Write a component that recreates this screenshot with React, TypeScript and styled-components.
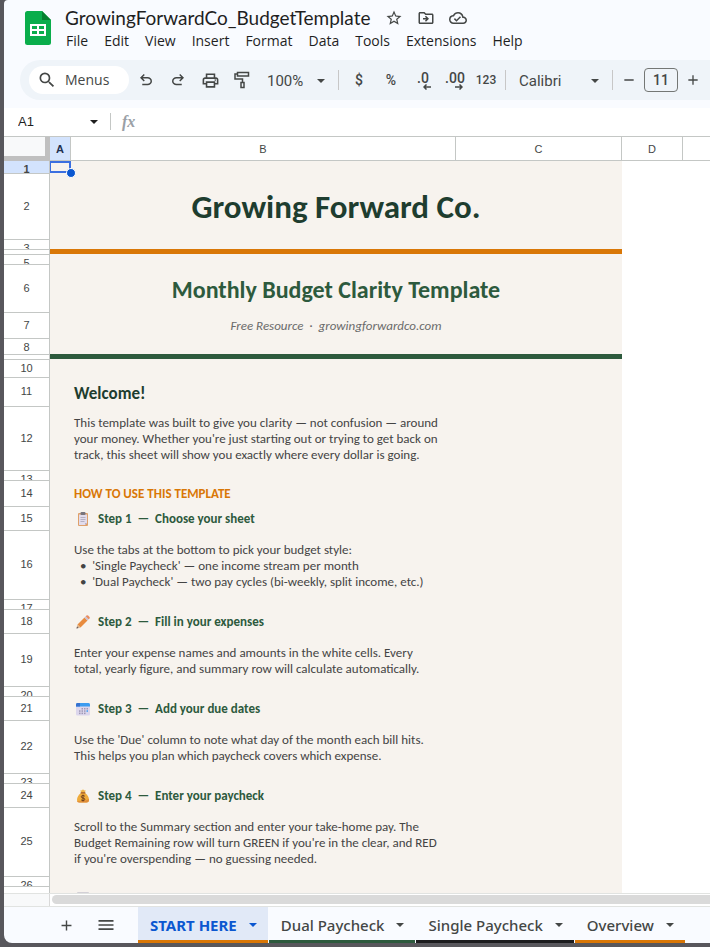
import React from "react";
import styled, { createGlobalStyle } from "styled-components";
import { MdAdd, MdMenu, MdOutlineCloudDone, MdOutlineDriveFileMove, MdOutlinePrint, MdRemove, MdSearch, MdStarBorder } from "react-icons/md";

const ui = '"Open Sans", "Noto Sans", sans-serif';
const sheetFont = 'Carlito, Calibri, Lato, sans-serif';
const line = "#c4c7c5";
const orange = "#d97706";
const green = "#2d5a3d";

const GlobalStyle = createGlobalStyle`
  *, *::before, *::after { box-sizing: border-box; }
  body { margin: 0; font-family: ${ui}; color: #1f1f1f; }
  button, input, select { font: inherit; color: inherit; border: 0; background: none; padding: 0; margin: 0; outline: 0; }
  button { cursor: pointer; display: inline-flex; align-items: center; justify-content: center; flex: none; }
  svg { display: block; flex: none; }
`;

const Frame = styled.div`
  height: 100vh;
  padding: 0 0 4px 4px;
  background: #58575c;
  overflow: hidden;
`;

const Workspace = styled.div`
  height: 100%;
  display: flex;
  flex-direction: column;
  background: #f9fbff;
  border-radius: 4px 0 0 8px;
  overflow: hidden;
`;

const Header = styled.header`
  display: flex;
  flex: none;
  gap: 14px;
  height: 60px;
  padding: 7px 0 0 21px;
`;

const LogoBox = styled.div`
  padding-top: 4px;
`;

const TitleRow = styled.div`
  display: flex;
  align-items: center;
  height: 22px;
`;

const DocTitle = styled.h1`
  margin: 0 8px 0 0;
  font: 400 19px/22px Lato, sans-serif;
  white-space: nowrap;
`;

const MenuBar = styled.nav`
  display: flex;
  height: 22px;
  margin-left: -7px;
`;

const MenuItem = styled.button`
  padding: 0 8px;
  font-size: 14px;
`;

const IconButton = styled.button<{ $w?: number }>`
  width: ${(p) => p.$w ?? 32}px;
  height: 28px;
  color: #444746;
`;

const Toolbar = styled.div`
  display: flex;
  flex: none;
  align-items: center;
  height: 40px;
  margin: 0 0 8px 16px;
  padding-left: 9px;
  border-radius: 20px 0 0 20px;
  background: #eff4f9;
  color: #444746;
  overflow: hidden;
`;

const SearchButton = styled.button`
  && { justify-content: flex-start; }
  gap: 8px;
  width: 100px;
  height: 28px;
  margin-right: 1px;
  padding-left: 8px;
  border-radius: 14px;
  background: #fff;
  font: 400 14px/20px ${ui};
`;

const Picker = styled.label<{ $w: number }>`
  display: flex;
  flex: none;
  align-items: center;
  width: ${(p) => p.$w}px;
  padding: 2px 9px 0;
`;

const PickerSelect = styled.select`
  appearance: none;
  flex: 1;
  min-width: 0;
  font: 400 15px/20px Roboto, sans-serif;
`;

const Divider = styled.span`
  flex: none;
  width: 1px;
  height: 20px;
  margin: 0 4px;
  background: #c7c7c7;
`;

const TextButton = styled.button<{ $size: number; $w?: number }>`
  position: relative;
  width: ${(p) => p.$w ?? 32}px;
  height: 28px;
  font: 500 ${(p) => p.$size}px/20px Roboto, sans-serif;
`;

const DecimalArrow = styled.svg`
  position: absolute;
  right: 8px;
  bottom: 4px;
`;

const DecimalText = styled.span`
  padding-bottom: 4px;
`;

const SizeInput = styled.input`
  flex: none;
  width: 34px;
  height: 24px;
  margin: 0 3px;
  border: 1px solid #747775;
  border-radius: 4px;
  text-align: center;
  font: 500 14px/20px Roboto, sans-serif;
`;

const FormulaBar = styled.div`
  display: flex;
  flex: none;
  align-items: center;
  height: 29px;
  padding: 0 0 1px 14px;
  background: #fff;
  border-bottom: 1px solid ${line};
`;

const NameBox = styled.label`
  display: flex;
  align-items: center;
  width: 80px;
  margin-right: 12px;
`;

const NameInput = styled.input`
  flex: 1;
  min-width: 0;
  font: 13px/20px "Liberation Sans", sans-serif;
`;

const BarLine = styled.span`
  width: 1px;
  height: 17px;
  margin-right: 11px;
  background: ${line};
`;

const Fx = styled.label`
  width: 24px;
  font: italic 700 16px/20px "Liberation Serif", serif;
  color: #9aa0a6;
`;

const FormulaInput = styled.input`
  flex: 1;
  min-width: 0;
  font: 13px/20px "Liberation Sans", sans-serif;
`;

const GridArea = styled.main`
  flex: 1;
  min-height: 0;
  overflow: hidden;
  background: #fff;
`;

const Table = styled.table`
  width: 100%;
  table-layout: fixed;
  border-collapse: separate;
  border-spacing: 0;
`;

const Col = styled.col<{ $w?: number }>`
  width: ${(p) => (p.$w ? `${p.$w}px` : "auto")};
`;

const Corner = styled.td`
  height: 24px;
  padding: 0;
  background: #f8f9fa;
  border: solid #c0c0c0;
  border-width: 0 5px 5px 0;
`;

const ColumnHead = styled.th<{ $active?: boolean }>`
  height: 24px;
  padding: 0;
  border: solid ${line};
  border-width: 0 1px 1px 0;
  background: ${(p) => (p.$active ? "#d3e3fd" : "#fff")};
  font: ${(p) => (p.$active ? 700 : 400)} 11px/22px "Liberation Sans", sans-serif;
  color: ${(p) => (p.$active ? "#1f3050" : "#444746")};

  &:last-child { border-right: 0; }
`;

const RowHead = styled.th<{ $active?: boolean }>`
  padding: 0;
  border-right: 1px solid ${line};
  background: ${(p) => (p.$active ? "#d3e3fd" : "#fff")};
  font: ${(p) => (p.$active ? 700 : 400)} 11px/16px "Liberation Sans", sans-serif;
  color: #444746;
`;

const RowLabel = styled.div<{ $h: number; $first?: boolean }>`
  height: ${(p) => p.$h}px;
  line-height: ${(p) => Math.max(p.$h - 2, 16)}px;
  border-top: ${(p) => (p.$first ? 0 : 1)}px solid ${line};
  overflow: hidden;
`;

const Cell = styled.td<{ $fill?: string; $selected?: boolean }>`
  position: relative;
  z-index: ${(p) => (p.$selected ? 1 : "auto")};
  padding: 0 3px;
  background: ${(p) => p.$fill ?? "#f7f3ee"};
  vertical-align: middle;
  line-height: 0;
`;

const BlankCell = styled.td`
  padding: 0;
`;

const Selection = styled.span`
  position: absolute;
  inset: 0;
  border: 2px solid #3b6fe0;
  border-left-width: 1px;

  &::after {
    content: "";
    position: absolute;
    right: -7px;
    bottom: -7px;
    width: 10px;
    height: 10px;
    border: 1px solid #fff;
    border-radius: 50%;
    background: #0b57d0;
  }
`;

const SheetTitle = styled.h2`
  margin: 0;
  padding-top: 2px;
  text-align: center;
  font: 700 33px/40px ${sheetFont};
  color: #1e3d2f;
`;

const SheetSubtitle = styled.h3`
  margin: 0;
  padding-top: 4px;
  text-align: center;
  font: 700 24px/28px ${sheetFont};
  color: ${green};
`;

const Tagline = styled.p`
  margin: 0;
  padding-top: 2px;
  text-align: center;
  white-space: pre;
  font: italic 400 13px/16px ${sheetFont};
  color: #6b6b6b;
`;

const Welcome = styled.h3`
  margin: 0;
  padding-top: 4px;
  font: 700 17px/20px ${sheetFont};
  color: #1e3d2f;
`;

const SectionLabel = styled.h4`
  margin: 0;
  padding-top: 2px;
  font: 700 13px/16px ${sheetFont};
  color: ${orange};
`;

const Step = styled.h4`
  display: flex;
  align-items: center;
  gap: 8px;
  margin: 0;
  padding: 2px 0 0 2px;
  white-space: pre;
  font: 700 13px/16px ${sheetFont};
  color: ${green};
`;

const Body = styled.p`
  margin: 0;
  padding-top: 2px;
  white-space: pre;
  font: 400 13px/16px ${sheetFont};
  color: #444;
`;

const ScrollStrip = styled.div`
  display: flex;
  flex: none;
  align-items: flex-start;
  height: 14px;
  background: #fff;
  border: solid #e1e3e1;
  border-width: 1px 0;
`;

const ScrollCorner = styled.div`
  width: 46px;
  height: 12px;
  margin-right: 2px;
  background: #f8f9fa;
  border-right: 1px solid #d9d9d9;
`;

const ScrollThumb = styled.div`
  flex: 1;
  height: 9px;
  margin-top: 1px;
  border-radius: 5px 0 0 5px;
  background: #dadada;
`;

const TabBar = styled.footer`
  display: flex;
  flex: none;
  align-items: center;
  height: 36px;
  padding-left: 42px;
  overflow: hidden;
`;

const Tabs = styled.div`
  display: flex;
  height: 36px;
  margin-left: 12px;
`;

const Tab = styled.button<{ $color: string; $active?: boolean }>`
  gap: 12px;
  height: 36px;
  padding: 3px 11px 0 12px;
  border-bottom: 3px solid ${(p) => p.$color};
  margin-right: 1px;
  background: ${(p) => (p.$active ? "#e1e9f7" : "transparent")};
  color: ${(p) => (p.$active ? "#0b57d0" : "#444746")};
  font: ${(p) => (p.$active ? 700 : 500)} 15px/20px "Noto Sans", sans-serif;
  white-space: nowrap;
`;

const Caret = () => (
  <svg width="8" height="4" viewBox="0 0 8 4" aria-hidden="true">
    <path d="M0 0h8L4 4z" fill="currentColor" />
  </svg>
);

const SheetsLogo = () => (
  <svg width="26" height="34" viewBox="0 0 26 34" aria-label="Sheets">
    <path d="M2.500 0H17l9 9v22.500a2.500 2.500 0 0 1-2.500 2.500h-21A2.500 2.500 0 0 1 0 31.500v-29A2.500 2.500 0 0 1 2.500 0z" fill="#0aad4b" />
    <path d="M17 0l9 9h-9z" fill="#06802f" />
    <path d="M5 13h16v12H5zM7 15v3h5v-3zm7 0v3h5v-3zm-7 5v3h5v-3zm7 0v3h5v-3z" fill="#fff" fillRule="evenodd" />
  </svg>
);

const Symbol = ({ d }: { d: string }) => (
  <svg width="18" height="18" viewBox="0 -960 960 960" aria-hidden="true">
    <path d={d} fill="currentColor" />
  </svg>
);

const UNDO = "M280-200v-80h284q63 0 109.500-40T720-420q0-60-46.500-100T564-560H312l104 104-56 56-200-200 200-200 56 56-104 104h252q97 0 166.500 63T800-420q0 94-69.500 157T564-200H280Z";
const REDO = "M396-200q-97 0-166.500-63T160-420q0-94 69.500-157T396-640h252L544-744l56-56 200 200-200 200-56-56 104-104H396q-63 0-109.500 40T240-420q0 60 46.500 100T396-280h284v80H396Z";

const RollerIcon = () => (
  <svg width="16" height="18" viewBox="0 0 16 18" fill="none" stroke="currentColor" strokeWidth="1.500" aria-hidden="true">
    <path d="M3.500 1.500h11v3.500h-11zM3.500 3H1v5h7.500v3.500M7 11.500h3v5H7z" />
  </svg>
);

const ClipboardIcon = () => (
  <svg width="14" height="14" viewBox="0 0 14 14" aria-hidden="true">
    <rect x="2" y="1" width="10" height="13" rx="1" fill="#dfa06a" />
    <path d="M3 2.500h8V11l-2 2H3z" fill="#e2dcec" />
    <path d="M9 13l2-2H9z" fill="#b9aecb" />
    <rect x="4.500" y="0" width="5" height="3" rx="1" fill="#77747d" />
    <path d="M4.500 5.500h5M4.500 7.500h5M4.500 9.500h4" stroke="#aaa4b8" strokeWidth="0.800" />
  </svg>
);

const PencilIcon = () => (
  <svg width="14" height="14" viewBox="0 0 14 14" aria-hidden="true">
    <path d="M0.500 13.500l1-4 3 3z" fill="#d9b58e" />
    <path d="M0.500 13.500l.5-2 1.500 1.500z" fill="#5b5563" />
    <path d="M1.500 9.500L8.500 2.500l3 3-7 7z" fill="#e88b3e" />
    <path d="M8.500 2.500l1.200-1.200 3 3-1.200 1.200z" fill="#c9c2d6" />
    <path d="M9.700 1.300l.8-.8q.8-.6 1.600 0l1.400 1.400q.6.800 0 1.600l-.8.800z" fill="#e88b5e" />
  </svg>
);

const CalendarIcon = () => (
  <svg width="14" height="14" viewBox="0 0 14 14" aria-hidden="true">
    <rect x="0" y="1" width="14" height="12.500" rx="1.500" fill="#dcd6ec" />
    <path d="M0 4.500V2.500Q0 1 1.500 1h11Q14 1 14 2.500v2z" fill="#3c9cf0" />
    <path d="M0 4.500V2.500Q0 1 1.500 1H4v3.500z" fill="#3571cf" />
    <g fill="#9f98b5">
      <rect x="5.500" y="6" width="1.500" height="1.500" /><rect x="8" y="6" width="1.500" height="1.500" /><rect x="10.500" y="6" width="1.500" height="1.500" />
      <rect x="3" y="8.300" width="1.500" height="1.500" /><rect x="5.500" y="8.300" width="1.500" height="1.500" /><rect x="8" y="8.300" width="1.500" height="1.500" />
      <rect x="3" y="10.600" width="1.500" height="1.500" /><rect x="5.500" y="10.600" width="1.500" height="1.500" /><rect x="8" y="10.600" width="1.500" height="1.500" />
    </g>
    <rect x="10.500" y="8.300" width="1.500" height="1.500" fill="#3c9cf0" />
  </svg>
);

const MoneyBagIcon = () => (
  <svg width="14" height="14" viewBox="0 0 14 14" aria-hidden="true">
    <path d="M5 4h4q4 3 4 7 0 2.500-2.500 2.500h-7Q1 13.500 1 11 1 7 5 4z" fill="#efab3b" />
    <path d="M13 10q0 3.500-2.500 3.500h-7Q1.500 13.500 1 12q7 1 12-2z" fill="#df8b3a" />
    <path d="M4.500 1l1.300.5L7 .3l1.200 1.200L9.500 1 9 4H5z" fill="#f0b64b" />
    <rect x="4.500" y="3.300" width="5" height="1.200" rx=".6" fill="#a35a28" />
    <path d="M8.800 7.300q-.6-.8-1.800-.8-1.700 0-1.700 1.200T7 9t1.800 1.300T7 11.600q-1.300 0-1.900-.9M7 5.700v6.700" fill="none" stroke="#70401f" strokeWidth="1" />
  </svg>
);

const ChartIcon = () => (
  <svg width="14" height="14" viewBox="0 0 14 14" aria-hidden="true">
    <rect x="1" y="0" width="12" height="14" rx="1" fill="#d3d0d6" />
  </svg>
);

type Row = { h: number; merged?: React.ReactNode; fill?: string; text?: React.ReactNode };

const rows: Row[] = [
  { h: 12 },
  { h: 66, merged: <SheetTitle>Growing Forward Co.</SheetTitle> },
  { h: 10 },
  { h: 5, merged: " ", fill: orange },
  { h: 10 },
  { h: 48, merged: <SheetSubtitle>Monthly Budget Clarity Template</SheetSubtitle> },
  { h: 26, merged: <Tagline>{"Free Resource  ·  growingforwardco.com"}</Tagline> },
  { h: 16 },
  { h: 5, merged: " ", fill: green },
  { h: 18 },
  { h: 29, text: <Welcome>Welcome!</Welcome> },
  { h: 64, text: <Body>{"This template was built to give you clarity — not confusion — around\nyour money. Whether you're just starting out or trying to get back on\ntrack, this sheet will show you exactly where every dollar is going."}</Body> },
  { h: 10 },
  { h: 26, text: <SectionLabel>HOW TO USE THIS TEMPLATE</SectionLabel> },
  { h: 24, text: <Step><ClipboardIcon />{"Step 1  —  Choose your sheet"}</Step> },
  { h: 69, text: <Body>{"Use the tabs at the bottom to pick your budget style:\n  •  'Single Paycheck' — one income stream per month\n  •  'Dual Paycheck' — two pay cycles (bi-weekly, split income, etc.)"}</Body> },
  { h: 10 },
  { h: 24, text: <Step><PencilIcon />{"Step 2  —  Fill in your expenses"}</Step> },
  { h: 53, text: <Body>{"Enter your expense names and amounts in the white cells. Every\ntotal, yearly figure, and summary row will calculate automatically."}</Body> },
  { h: 10 },
  { h: 24, text: <Step><CalendarIcon />{"Step 3  —  Add your due dates"}</Step> },
  { h: 53, text: <Body>{"Use the 'Due' column to note what day of the month each bill hits.\nThis helps you plan which paycheck covers which expense."}</Body> },
  { h: 10 },
  { h: 24, text: <Step><MoneyBagIcon />{"Step 4  —  Enter your paycheck"}</Step> },
  { h: 69, text: <Body>{"Scroll to the Summary section and enter your take-home pay. The\nBudget Remaining row will turn GREEN if you're in the clear, and RED\nif you're overspending — no guessing needed."}</Body> },
  { h: 10 },
  { h: 24, text: <Step><ChartIcon /></Step> },
];

// Rows this thin have no room for a number, and the last one starts at the fold.
const showsNumber = (row: Row, index: number) => row.h > 5 && index < rows.length - 1;

const menus = ["File", "Edit", "View", "Insert", "Format", "Data", "Tools", "Extensions", "Help"];

const tabs = [
  { name: "START HERE", color: orange, active: true },
  { name: "Dual Paycheck", color: green },
  { name: "Single Paycheck", color: "#1c1c1e" },
  { name: "Overview", color: orange },
];

export default function App() {
  return (
    <Frame>
      <GlobalStyle />
      <Workspace>
        <Header>
          <LogoBox><SheetsLogo /></LogoBox>
          <div>
            <TitleRow>
              <DocTitle>GrowingForwardCo_BudgetTemplate</DocTitle>
              <IconButton aria-label="Star"><MdStarBorder size={18} /></IconButton>
              <IconButton aria-label="Move"><MdOutlineDriveFileMove size={18} /></IconButton>
              <IconButton aria-label="Document status"><MdOutlineCloudDone size={18} /></IconButton>
            </TitleRow>
            <MenuBar>{menus.map((m) => <MenuItem key={m}>{m}</MenuItem>)}</MenuBar>
          </div>
        </Header>

        <Toolbar role="toolbar">
          <SearchButton><MdSearch size={20} />Menus</SearchButton>
          <IconButton aria-label="Undo"><Symbol d={UNDO} /></IconButton>
          <IconButton aria-label="Redo"><Symbol d={REDO} /></IconButton>
          <IconButton aria-label="Print"><MdOutlinePrint size={19} /></IconButton>
          <IconButton aria-label="Paint format"><RollerIcon /></IconButton>
          <Picker $w={76}>
            <PickerSelect aria-label="Zoom" defaultValue="100%"><option>100%</option></PickerSelect>
            <Caret />
          </Picker>
          <Divider />
          <TextButton $size={14}>$</TextButton>
          <TextButton $size={14}>%</TextButton>
          <TextButton $size={14} aria-label="Decrease decimal places">
            <DecimalText>.0</DecimalText>
            <DecimalArrow width="8" height="6" viewBox="0 0 8 6" fill="none" stroke="currentColor" strokeWidth="1.500"><path d="M8 3H1M3.500.5L1 3l2.500 2.500" /></DecimalArrow>
          </TextButton>
          <TextButton $size={14} aria-label="Increase decimal places">
            <DecimalText>.00</DecimalText>
            <DecimalArrow width="8" height="6" viewBox="0 0 8 6" fill="none" stroke="currentColor" strokeWidth="1.500"><path d="M0 3h7M4.500.5L7 3 4.500 5.500" /></DecimalArrow>
          </TextButton>
          <TextButton $size={12} $w={30}>123</TextButton>
          <Divider />
          <Picker $w={98}>
            <PickerSelect aria-label="Font" defaultValue="Calibri"><option>Calibri</option></PickerSelect>
            <Caret />
          </Picker>
          <Divider />
          <IconButton $w={24} aria-label="Decrease font size"><MdRemove size={16} /></IconButton>
          <SizeInput aria-label="Font size" defaultValue="11" />
          <IconButton $w={24} aria-label="Increase font size"><MdAdd size={16} /></IconButton>
        </Toolbar>

        <FormulaBar>
          <NameBox><NameInput aria-label="Name box" defaultValue="A1" /><Caret /></NameBox>
          <BarLine />
          <Fx htmlFor="formula">fx</Fx>
          <FormulaInput id="formula" />
        </FormulaBar>

        <GridArea>
          <Table>
            <colgroup>
              <Col $w={46} /><Col $w={21} /><Col $w={385} /><Col $w={166} /><Col $w={61} /><Col />
            </colgroup>
            <thead>
              <tr>
                <Corner />
                <ColumnHead $active>A</ColumnHead>
                <ColumnHead>B</ColumnHead>
                <ColumnHead>C</ColumnHead>
                <ColumnHead>D</ColumnHead>
                <ColumnHead aria-label="E" />
              </tr>
            </thead>
            <tbody>
              {rows.map((r, i) => (
                <tr key={i}>
                  <RowHead $active={i === 0}>
                    <RowLabel $h={r.h} $first={i === 0}>{showsNumber(r, i) ? i + 1 : null}</RowLabel>
                  </RowHead>
                  {r.merged ? (
                    <Cell colSpan={3} $fill={r.fill}>{r.merged}</Cell>
                  ) : (
                    <>
                      <Cell $selected={i === 0}>{i === 0 && <Selection />}</Cell>
                      <Cell>{r.text}</Cell>
                      <Cell />
                    </>
                  )}
                  <BlankCell colSpan={2} />
                </tr>
              ))}
            </tbody>
          </Table>
        </GridArea>

        <ScrollStrip><ScrollCorner /><ScrollThumb /></ScrollStrip>

        <TabBar>
          <IconButton $w={40} aria-label="Add sheet"><MdAdd size={17} /></IconButton>
          <IconButton $w={40} aria-label="All sheets"><MdMenu size={20} /></IconButton>
          <Tabs>
            {tabs.map((t) => (
              <Tab key={t.name} $color={t.color} $active={t.active}>{t.name}<Caret /></Tab>
            ))}
          </Tabs>
        </TabBar>
      </Workspace>
    </Frame>
  );
}
